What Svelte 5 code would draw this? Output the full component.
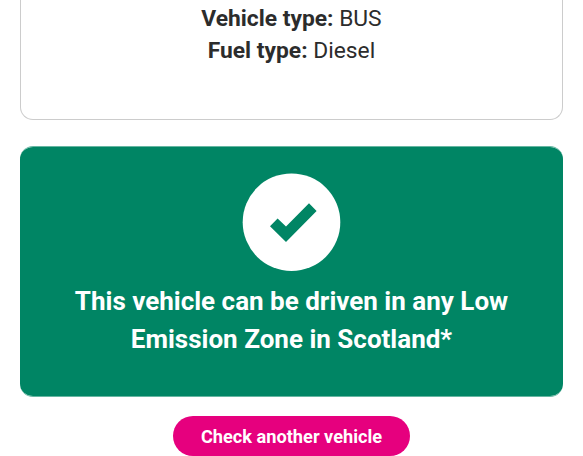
<script>
	export let vehicleType = "BUS"
	export let fuelType = "Diesel"
</script>

<main>
	<section class="details">
		<p><strong>Vehicle type:</strong> {vehicleType}</p>
		<p><strong>Fuel type:</strong> {fuelType}</p>
	</section>
	<section class="result">
		<svg viewBox="0 0 98 98" aria-hidden="true">
			<circle cx="48.5" cy="49.2" r="48.8" />
			<path d="M27 53.2L34.6 45.4L43 53.5L66 30.3L73.6 38L43 69Z" />
		</svg>
		<h2>This vehicle can be driven in any Low<br>Emission Zone in Scotland*</h2>
	</section>
	<button>Check another vehicle</button>
</main>

<style>
	:global(body) {
		margin: 0;
		background: #fff;
		overflow: hidden;
	}
	main {
		display: flex;
		flex-direction: column;
		align-items: center;
		box-sizing: border-box;
		height: 456px;
		padding: 0 20px;
		font-family: Roboto, sans-serif;
		color: #2c2c2c;
	}
	section {
		box-sizing: border-box;
		width: 100%;
		text-align: center;
	}
	.details {
		height: 120px;
		padding-top: 3px;
		border: 1px solid #ccc;
		border-top: none;
		border-radius: 0 0 13px 13px;
	}
	p {
		margin: 0;
		font-size: 22.8px;
		line-height: 32px;
	}
	.result {
		display: flex;
		flex-direction: column;
		align-items: center;
		height: 251px;
		margin-top: 26px;
		padding-top: 27px;
		border-radius: 13px;
		border-top: 1px solid #66b6a2;
		border-bottom: 1px solid #66b6a2;
		background: #008564;
		background-clip: padding-box;
	}
	svg {
		display: block;
		width: 98px;
		height: 98px;
		margin-top: -1px;
		overflow: visible;
	}
	circle {
		fill: #fff;
	}
	path {
		fill: #008564;
	}
	h2 {
		margin: 11px 0 0;
		color: #fff;
		font-size: 26px;
		font-weight: 700;
		line-height: 38px;
	}
	button {
		width: 237px;
		height: 40px;
		margin-top: 19px;
		padding: 0;
		border: none;
		border-radius: 20px;
		background: #e6007e;
		color: #fff;
		font: 700 18.2px Roboto, sans-serif;
	}
</style>
